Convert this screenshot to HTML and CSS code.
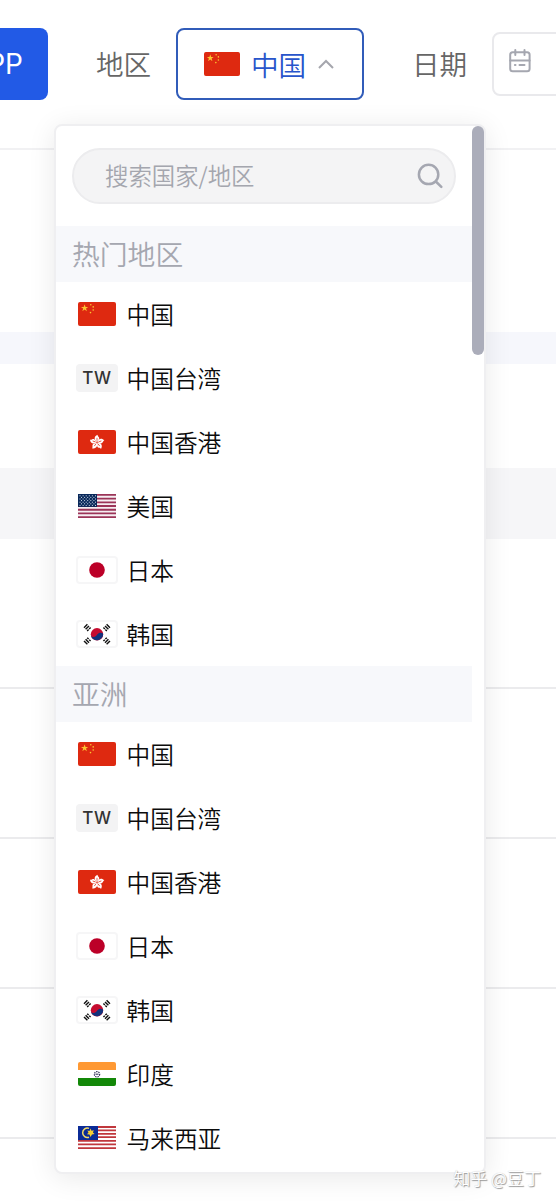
FILE: index.html
```html
<!DOCTYPE html>
<html lang="zh-CN">
<head>
<meta charset="utf-8">
<title>地区</title>
<link rel="stylesheet" href="styles.css">
</head>
<body>
<svg class="defs" aria-hidden="true">
  <symbol id="star" viewBox="-10 -10 20 20"><path d="M0-10 2.4-3.1 9.5-3.1 3.8 1.2 5.9 8.1 0 4-5.9 8.1-3.8 1.2-9.5-3.1-2.4-3.1Z"/></symbol>
  <symbol id="cn" viewBox="0 0 38 24" preserveAspectRatio="none">
    <rect width="38" height="24" rx="2" fill="#de2910"/>
    <g fill="#fbc531"><use href="#star" x="2.8" y="2.3" width="7.600" height="7.600"/><circle cx="12.8" cy="2.8" r=".8"/><circle cx="15.2" cy="4.9" r=".8"/><circle cx="15.2" cy="8" r=".8"/><circle cx="12.5" cy="10.6" r=".8"/></g>
  </symbol>
  <symbol id="hk" viewBox="0 0 38 24">
    <rect width="38" height="24" rx="2" fill="#de2910"/>
    <g transform="translate(19 12.4)" fill="#fff">
      <path id="petal" d="M0-.5C-3-2-3.400-6 .6-7.600 0-6 3.800-5 1.600-2.400Z"/>
      <use href="#petal" transform="rotate(72)"/><use href="#petal" transform="rotate(144)"/><use href="#petal" transform="rotate(216)"/><use href="#petal" transform="rotate(288)"/>
      <g stroke="#de2910" stroke-width=".7"><path id="vein" d="M0-1.600V-4.600"/><use href="#vein" transform="rotate(72)"/><use href="#vein" transform="rotate(144)"/><use href="#vein" transform="rotate(216)"/><use href="#vein" transform="rotate(288)"/></g>
    </g>
  </symbol>
  <symbol id="us" viewBox="0 0 38 24">
    <rect width="38" height="24" fill="#f6eef2"/>
    <path d="M0 .92H38M0 4.620H38M0 8.310H38M0 12H38M0 15.700H38M0 19.400H38M0 23.080H38" stroke="#9b3458" stroke-width="1.850"/>
    <rect width="19" height="12.900" fill="#08285a"/>
    <path d="M1.500 1.800H18M1.500 5H18M1.500 8.200H18M1.500 11.400H18" stroke="#d5dfeb" stroke-width="1" stroke-dasharray="1 2.100"/>
    <path d="M3 3.400H17.500M3 6.600H17.500M3 9.800H17.500" stroke="#d5dfeb" stroke-width="1" stroke-dasharray="1 2.100"/>
  </symbol>
  <symbol id="jp" viewBox="0 0 38 24"><circle cx="19" cy="12" r="7.800" fill="#bc0028"/></symbol>
  <symbol id="kr" viewBox="0 0 38 24">
    <g transform="translate(19 12.300)">
      <circle r="6.200" fill="#c60c30"/>
      <path d="M-6.100 1.200C-4 4-.8 2.500 0 .5 1.500-2 4.500-2 6.100-.9A6.200 6.200 0 0 1-6.100 1.200Z" fill="#11327c"/>
      <g stroke="#111" stroke-width="1.400">
        <g id="gua"><path d="M-13-6.600-9.600-10M-11.400-5-8-8.400"/><path d="M-9.800-3.400-6.400-6.800" stroke-dasharray="2 .8"/></g>
        <use href="#gua" transform="rotate(180)"/><use href="#gua" transform="scale(-1 1)"/><use href="#gua" transform="scale(1 -1)"/>
      </g>
    </g>
  </symbol>
  <symbol id="in" viewBox="0 0 38 24">
    <rect width="38" height="24" rx="2" fill="#fff"/><path d="M2 0H36Q38 0 38 2V8H0V2Q0 0 2 0Z" fill="#ff9933"/><path d="M0 16H38V22Q38 24 36 24H2Q0 24 0 22Z" fill="#138808"/>
    <g fill="none" stroke="#25254f"><circle cx="19" cy="12.300" r="2.700" stroke-width="1.100" stroke-dasharray="1.400 .9"/><path d="M17.500 12.200H20.500"/></g>
  </symbol>
  <symbol id="my" viewBox="0 0 38 24">
    <rect width="38" height="24" fill="#fff"/>
    <path d="M0 1H38M0 4.400H38M0 7.800H38M0 11.200H38M0 14.800H38M0 18.400H38M0 22.200H38" stroke="#c0373c" stroke-width="1.800"/>
    <rect width="20" height="14" fill="#0b2b96"/>
    <path d="M11 2.400A4.700 4.700 0 1 0 11 11.200" fill="none" stroke="#f6dc65" stroke-width="1.500"/>
    <path d="M12.500 2.600 13.500 4.800 15.800 4.200 14.900 6.500 16.600 8 14 8.500 12.500 11 11.500 8.600 9 8.200 10.500 6.600 9.300 4.500 11.500 4.900Z" fill="#f7cf33"/>
  </symbol>
</svg>

<div class="page">
  <header class="toolbar">
    <div class="app-button">APP</div>
    <span class="label region-label">地区</span>
    <div class="region-select">
      <svg class="select-flag"><use href="#cn"/></svg>
      <span>中国</span>
      <svg class="chevron" viewBox="0 0 16 10"><path d="M1 9 8 2 15 9"/></svg>
    </div>
    <span class="label date-label">日期</span>
    <div class="date-field">
      <svg class="calendar" viewBox="0 0 22 24"><rect x="1.200" y="3.200" width="19.400" height="19" rx="2.500"/><path d="M1.200 11.500H20.600M6.300 1V6M15.500 1V6M5.900 16H6.500M10.500 16H15.500"/></svg>
    </div>
  </header>
  <main class="results">
    <div class="summary"></div>
    <div class="divider-band"></div>
    <div class="tabs"></div>
    <div class="table-head"></div>
    <div class="table-row"></div>
    <div class="table-row"></div>
    <div class="table-row"></div>
    <div class="table-row"></div>
  </main>

  <div class="dropdown">
    <div class="options">
      <div class="search">
        <span>搜索国家/地区</span>
        <svg class="search-icon" viewBox="0 0 26 26"><circle cx="11.600" cy="11.400" r="9.700"/><path d="M18.800 18.500 24.300 23.800"/></svg>
      </div>
      <div class="group-title">热门地区</div>
      <div class="option"><svg class="flag"><use href="#cn"/></svg><span>中国</span></div>
      <div class="option"><span class="flag code">TW</span><span>中国台湾</span></div>
      <div class="option"><svg class="flag"><use href="#hk"/></svg><span>中国香港</span></div>
      <div class="option"><svg class="flag"><use href="#us"/></svg><span>美国</span></div>
      <div class="option"><svg class="flag outlined"><use href="#jp"/></svg><span>日本</span></div>
      <div class="option"><svg class="flag outlined"><use href="#kr"/></svg><span>韩国</span></div>
      <div class="group-title">亚洲</div>
      <div class="option"><svg class="flag"><use href="#cn"/></svg><span>中国</span></div>
      <div class="option"><span class="flag code">TW</span><span>中国台湾</span></div>
      <div class="option"><svg class="flag"><use href="#hk"/></svg><span>中国香港</span></div>
      <div class="option"><svg class="flag outlined"><use href="#jp"/></svg><span>日本</span></div>
      <div class="option"><svg class="flag outlined"><use href="#kr"/></svg><span>韩国</span></div>
      <div class="option"><svg class="flag"><use href="#in"/></svg><span>印度</span></div>
      <div class="option"><svg class="flag"><use href="#my"/></svg><span>马来西亚</span></div>
    </div>
    <div class="scroll-track"><div class="scroll-thumb"></div></div>
  </div>
  <div class="watermark">知乎 @豆丁</div>
</div>
</body>
</html>
```
FILE: styles.css
```css
* { box-sizing: border-box; }
body {
  margin: 0;
  background: #fff;
  font-family: "Noto Sans CJK SC", sans-serif;
  font-weight: 350;
  overflow: hidden;
}
.defs { display: none; }
.page {
  position: relative;
  width: 556px;
  height: 1202px;
  overflow: hidden;
}
.toolbar {
  display: flex;
  align-items: flex-start;
  height: 150px;
  padding-top: 28px;
  border-bottom: 2px solid #f1f1f3;
}
.app-button {
  display: flex;
  flex: none;
  align-items: center;
  justify-content: flex-end;
  width: 48px;
  height: 72px;
  padding-right: 25px;
  border-radius: 0 8px 8px 0;
  background: #225ae6;
  color: #fff;
  font: 28px "Inter", sans-serif;
}
.label {
  flex: none;
  width: 56px;
  height: 72px;
  line-height: 71px;
  font-size: 27.6px;
  color: #666;
}
.region-label { margin-left: 48px; }
.region-select {
  display: flex;
  flex: none;
  align-items: center;
  width: 188px;
  height: 72px;
  margin-left: 24px;
  padding: 0 0 1px 26px;
  border: 2px solid #315cb9;
  border-radius: 8px;
  color: #2855cb;
  font-size: 27.6px;
}
.select-flag { width: 36px; height: 24px; margin-right: 11px; }
.chevron {
  width: 16px;
  height: 10px;
  margin-left: 12px;
  fill: none;
  stroke: #a5a6ad;
  stroke-width: 2;
}
.date-label { margin-left: 48px; }
.date-field {
  flex: none;
  width: 200px;
  height: 64px;
  margin: 4px 0 0 24px;
  padding: 15px 0 0 15px;
  border: 2px solid #e9e9ec;
  border-radius: 8px;
}
.calendar {
  display: block;
  width: 22px;
  height: 24px;
  fill: none;
  stroke: #a5a7b0;
  stroke-width: 2;
  stroke-linecap: round;
}
.summary { height: 182px; }
.divider-band { height: 32px; background: #f6f7fc; }
.tabs { height: 104px; }
.table-head { height: 71px; background: #f6f6f8; }
.table-row { height: 150px; border-bottom: 2px solid #ebebed; }
.dropdown {
  position: absolute;
  top: 124px;
  left: 54px;
  display: flex;
  width: 432px;
  height: 1050px;
  border: 2px solid #efeff1;
  border-radius: 8px;
  background: #fff;
  box-shadow: 0 4px 28px rgba(0, 0, 0, .09);
}
.options { width: 416px; }
.search {
  display: flex;
  align-items: center;
  justify-content: space-between;
  height: 56px;
  margin: 22px 16px;
  padding: 0 11px 0 31px;
  border: 2px solid #ececee;
  border-radius: 28px;
  background: #f4f4f5;
  color: #a4a6ae;
  font-size: 23.4px;
}
.search span { padding-bottom: 2px; }
.search-icon {
  width: 26px;
  height: 26px;
  fill: none;
  stroke: #a5a7b1;
  stroke-width: 2.5;
  stroke-linecap: round;
}
.group-title {
  height: 56px;
  padding-left: 16px;
  background: #f7f8fb;
  color: #a5a7b0;
  font-size: 27.8px;
  line-height: 55px;
}
.option {
  display: flex;
  align-items: center;
  height: 64px;
  padding-left: 20px;
  color: #0c0c0c;
  font-size: 23.7px;
}
.flag {
  flex: none;
  width: 42px;
  height: 28px;
  margin-right: 8.5px;
  padding: 2px;
}
.outlined { border: 2px solid #f6f6f7; border-radius: 4px; padding: 0; }
.code {
  border-radius: 4px;
  background: #f3f3f4;
  color: #333;
  font: 500 17px/25px "Inter", sans-serif;
  letter-spacing: .8px;
  text-align: center;
}
.scroll-track { width: 12px; }
.scroll-thumb { height: 229px; border-radius: 6px; background: #abadba; }
.watermark {
  position: absolute;
  right: 15px;
  bottom: 11px;
  color: #fff;
  font-size: 17px;
  line-height: 26px;
  text-shadow: 1px 1px 1px #999, 0 0 1px #bbb;
}
```
